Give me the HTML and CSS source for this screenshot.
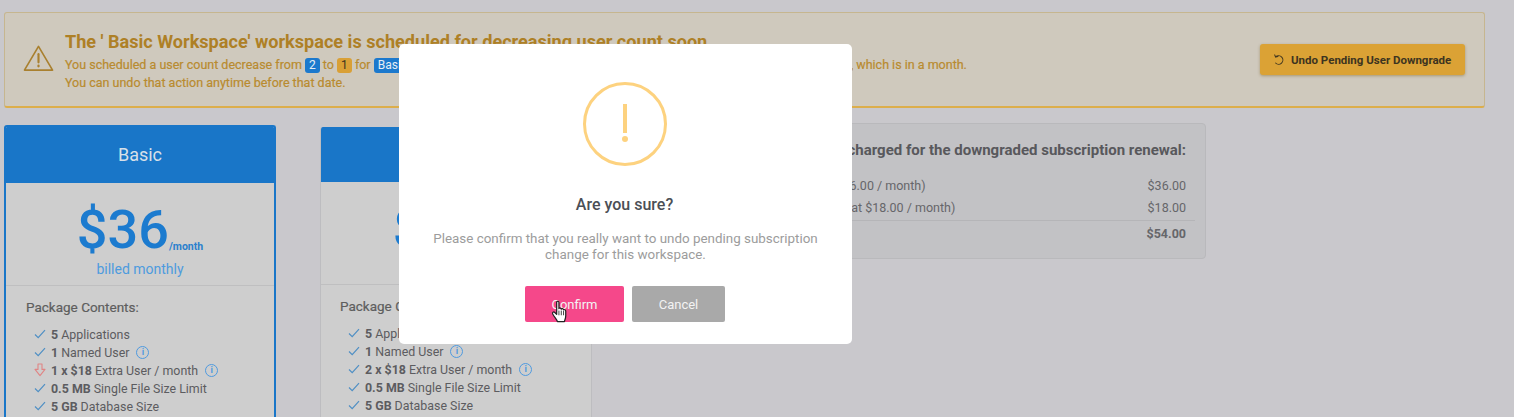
FILE: index.html
```html
<!DOCTYPE html>
<html lang="en">
<head>
<meta charset="utf-8">
<title>Subscription</title>
<link rel="stylesheet" href="styles.css">
</head>
<body>
<main class="page">
  <section class="alert">
    <svg class="alert-icon" viewBox="0 0 32 28" width="31" height="28" fill="none" stroke="#a9802f" stroke-width="1.7" stroke-linejoin="round" stroke-linecap="round">
      <path d="M16 2 L30.5 26.5 H1.5 Z"/>
      <path d="M16 10 V18.5" stroke-width="2.2"/>
      <path d="M16 22 V22.6" stroke-width="2.4"/>
    </svg>
    <div class="alert-text">
      <h2 class="alert-title">The ' Basic Workspace' workspace is scheduled for decreasing user count soon</h2>
      <p class="alert-line">You scheduled a user count decrease from <span class="tag tag-blue">2</span> to <span class="tag tag-amber">1</span> for <span class="tag tag-blue">Basic</span> subscription, effective on your next scheduled billing renewal date, 12/02/2022, which is in a month.</p>
      <p class="alert-line">You can undo that action anytime before that date.</p>
    </div>
    <button class="undo-btn">
      <svg viewBox="0 0 14 14" width="12" height="12" fill="none" stroke="#3d3420" stroke-width="1.2" stroke-linecap="round" stroke-linejoin="round"><path d="M3.2 3.2 A5 5 0 1 1 3 10.5"/><path d="M2 1 L3 3.6 L5.8 3"/></svg>
      Undo Pending User Downgrade
    </button>
  </section>

  <section class="row">
    <article class="card card-active">
      <header class="card-head">Basic</header>
      <div class="card-body">
        <div class="price"><span class="amount">$36</span><span class="per">/month</span></div>
        <div class="billed">billed monthly</div>
        <div class="contents">
          <h3 class="contents-title">Package Contents:</h3>
          <ul class="features">
            <li><svg class="ic" viewBox="0 0 12 10"><path d="M1 5.5 L4.2 8.6 L11 1.2" class="ck"/></svg><span><b>5</b> Applications</span></li>
            <li><svg class="ic" viewBox="0 0 12 10"><path d="M1 5.5 L4.2 8.6 L11 1.2" class="ck"/></svg><span><b>1</b> Named User</span><span class="info">i</span></li>
            <li><svg class="ic ic-down" viewBox="0 0 12 14"><path d="M4 1 H8 V6.4 H11 L6 12.6 L1 6.4 H4 Z" class="down"/></svg><span><b>1 x $18</b> Extra User / month</span><span class="info">i</span></li>
            <li><svg class="ic" viewBox="0 0 12 10"><path d="M1 5.5 L4.2 8.6 L11 1.2" class="ck"/></svg><span><b>0.5 MB</b> Single File Size Limit</span></li>
            <li><svg class="ic" viewBox="0 0 12 10"><path d="M1 5.5 L4.2 8.6 L11 1.2" class="ck"/></svg><span><b>5 GB</b> Database Size</span></li>
          </ul>
        </div>
      </div>
    </article>

    <article class="card card-plain">
      <header class="card-head">Basic</header>
      <div class="card-body">
        <div class="price"><span class="amount">$54</span><span class="per">/month</span></div>
        <div class="billed">billed monthly</div>
        <div class="contents">
          <h3 class="contents-title">Package Contents:</h3>
          <ul class="features">
            <li><svg class="ic" viewBox="0 0 12 10"><path d="M1 5.5 L4.2 8.6 L11 1.2" class="ck"/></svg><span><b>5</b> Applications</span></li>
            <li><svg class="ic" viewBox="0 0 12 10"><path d="M1 5.5 L4.2 8.6 L11 1.2" class="ck"/></svg><span><b>1</b> Named User</span><span class="info">i</span></li>
            <li><svg class="ic" viewBox="0 0 12 10"><path d="M1 5.5 L4.2 8.6 L11 1.2" class="ck"/></svg><span><b>2 x $18</b> Extra User / month</span><span class="info">i</span></li>
            <li><svg class="ic" viewBox="0 0 12 10"><path d="M1 5.5 L4.2 8.6 L11 1.2" class="ck"/></svg><span><b>0.5 MB</b> Single File Size Limit</span></li>
            <li><svg class="ic" viewBox="0 0 12 10"><path d="M1 5.5 L4.2 8.6 L11 1.2" class="ck"/></svg><span><b>5 GB</b> Database Size</span></li>
          </ul>
        </div>
      </div>
    </article>

    <aside class="summary">
      <h3 class="summary-title">You will be charged for the downgraded subscription renewal:</h3>
      <div class="sum-row"><span>Basic Workspace monthly license ($36.00 / month)</span><span>$36.00</span></div>
      <div class="sum-row"><span>1 extra user on the Basic Workspace (at $18.00 / month)</span><span>$18.00</span></div>
      <div class="sum-row sum-total"><span>Total</span><span>$54.00</span></div>
    </aside>
  </section>
</main>

<div class="modal" role="dialog">
  <div class="modal-icon"><span class="bang"></span><span class="dot"></span></div>
  <h2 class="modal-title">Are you sure?</h2>
  <p class="modal-text">Please confirm that you really want to undo pending subscription<br>change for this workspace.</p>
  <div class="modal-actions">
    <button class="btn btn-confirm">Confirm</button>
    <button class="btn btn-cancel">Cancel</button>
  </div>
  <svg class="cursor" viewBox="0 0 18 24" width="17" height="23">
    <path d="M6 2.2 C6 .8 8.4 .8 8.4 2.2 V9 C8.6 8 10.8 8 10.9 9.6 C11.2 8.6 13.2 8.8 13.3 10.4 C13.7 9.6 15.6 10 15.6 11.6 V16.5 C15.6 19.5 14.6 20.6 14.2 22.6 H6.8 C6 20.4 3.8 18.2 1.8 14.6 C1 13 2.8 11.8 4 13 L6 15 Z" fill="#fff" stroke="#222" stroke-width="1.3" stroke-linejoin="round"/>
    <path d="M8.4 11 V16 M10.9 11 V16 M13.3 11.5 V16" stroke="#222" stroke-width=".9" fill="none"/>
  </svg>
</div>
</body>
</html>
```

FILE: styles.css
```css
* { box-sizing: border-box; }
html, body { margin: 0; height: 417px; overflow: hidden; }
body { background: #c9c8cc; font-family: Roboto, "Liberation Sans", sans-serif; color: #555; }
.page { padding: 12px 29px 0 4px; }

.alert { display: flex; align-items: center; height: 96px; padding: 0 19px 0 18px; background: #cfc9bd; border: 1px solid #c6b68f; border-bottom: 2px solid #dcae4b; border-radius: 3px; }
.alert-icon { flex: none; margin-right: 11px; margin-top: -3px; }
.alert-text { flex: 1; min-width: 0; padding-top: 1px; }
.alert-title { margin: 1px 0 2px; font-size: 18.1px; line-height: 24px; font-weight: 700; color: #ae8026; }
.alert-line { margin: 0; height: 18px; font-size: 12.5px; line-height: 18px; color: #b98b2f; white-space: nowrap; -webkit-text-stroke: .2px #b98b2f; }
.tag { display: inline-block; padding: 0 4px; border-radius: 3px; font-size: 12px; line-height: 15px; color: #e6eef5; background: #1c79cd; -webkit-text-stroke: 0; }
.tag-amber { background: #d9a036; color: #3d3420; }
.undo-btn { flex: none; display: flex; align-items: center; gap: 6px; width: 205px; height: 31px; padding: 0 0 0 13px; border: 0; border-radius: 3px; background: #dba235; box-shadow: 0 1px 3px rgba(120,90,20,.45); font-family: Roboto, sans-serif; font-size: 11.5px; font-weight: 700; color: #3d3420; white-space: nowrap; }

.row { display: flex; align-items: flex-start; margin-top: 15px; }
.card { flex: none; border-radius: 3px 3px 0 0; overflow: hidden; height: 300px; }
.card-active { width: 272px; margin-top: 2px; border: 2px solid #1976c8; border-bottom: 0; }
.card-plain { width: 272px; margin-top: 4px; margin-left: 44px; border: 1px solid #bdbdc0; border-top: 0; border-bottom: 0; }
.card-head { height: 56px; padding-bottom: 2px; display: flex; align-items: center; justify-content: center; background: #1976c8; font-size: 18px; color: #d7e0e8; }
.card-active .card-head { margin: 0 -2px; }
.card-plain .card-head { height: 55px; margin: 0 -1px; }
.card-body { height: 100%; background: #cecece; }
.price { height: 78px; display: flex; align-items: flex-end; justify-content: center; color: #1c7bcf; }
.amount { font-size: 54px; line-height: 62px; font-weight: 500; }
.per { font-size: 10.5px; font-weight: 700; line-height: 14px; margin-bottom: 7px; color: #2a80cd; }
.billed { height: 25px; padding-bottom: 1px; text-align: center; font-size: 14px; line-height: 17px; color: #4d9bde; border-bottom: 1px solid #bfbfc0; }
.contents { padding: 12px 0 0 20px; }
.card-plain .contents { padding-left: 19px; }
.contents-title { margin: 0 0 9px; font-size: 13.5px; line-height: 18px; font-weight: 400; color: #5e5e5e; -webkit-text-stroke: .2px #5e5e5e; }
.features { margin: 0; padding: 0 0 0 8px; list-style: none; }
.features li { display: flex; align-items: center; gap: 5px; height: 18px; font-size: 12.4px; color: #5c5c60; white-space: nowrap; }
.features b { font-weight: 700; }
.ic { flex: none; width: 12px; height: 10px; overflow: visible; }
.ic-down { height: 14px; }
.ck { fill: none; stroke: #4f8fc4; stroke-width: 1.2; }
.down { fill: none; stroke: #e08585; stroke-width: 1.1; stroke-linejoin: round; }
.info { display: inline-block; width: 13px; height: 13px; margin-left: 2px; border: 1.3px solid #4f9ae0; border-radius: 50%; font-size: 9px; line-height: 10px; font-weight: 700; text-align: center; color: #4f9ae0; }

.summary { flex: none; width: 584px; height: 136px; margin-left: 30px; padding: 16px 19px 0; background: #c2c2c5; border: 1px solid #b9b9bc; border-radius: 4px; }
.summary-title { margin: 0 0 15px; font-size: 15px; line-height: 20px; font-weight: 700; color: #58585c; text-align: right; white-space: nowrap; }
.sum-row { display: flex; justify-content: space-between; font-size: 12.5px; line-height: 22px; color: #66666a; white-space: nowrap; }
.sum-total { margin: 1px -9px 0 0; padding: 1px 9px 0 0; border-top: 1px solid #b5b5b8; font-weight: 700; line-height: 24px; }

.modal { position: absolute; left: 399px; top: 44px; width: 453px; height: 300px; padding-top: 38px; background: #fff; border-radius: 5px; text-align: center; }
.modal-icon { display: flex; flex-direction: column; align-items: center; width: 84px; height: 84px; margin: 0 auto; padding-top: 19px; border: 3px solid #fdd27f; border-radius: 50%; transform: translateX(-1px); }
.bang { width: 4px; height: 29px; background: #fdd27f; }
.dot { width: 6px; height: 6px; margin-top: 3px; border-radius: 50%; background: #fdd27f; }
.modal-title { margin: 26px 0 0; font-size: 16px; line-height: 26px; font-weight: 500; color: #4b4f56; transform: translateX(-1px); }
.modal-text { margin: 13px 0 0; font-size: 13.4px; line-height: 16px; color: #9c9c9c; }
.modal-actions { display: flex; gap: 8px; margin: 23px 0 0 126px; }
.btn { height: 36px; border: 0; border-radius: 2px; font-family: Roboto, sans-serif; font-size: 13px; color: #f3f3f3; }
.btn-confirm { width: 99px; background: #f5488a; }
.btn-cancel { width: 93px; background: #a9a9a9; }
.cursor { position: absolute; left: 152px; top: 256px; }
```
